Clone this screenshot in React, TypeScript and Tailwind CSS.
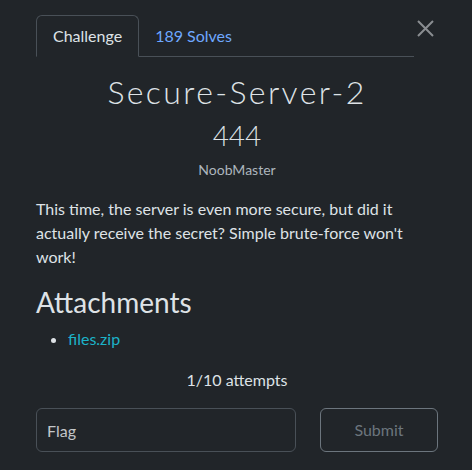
import React, { useState } from 'react';

const font = { fontFamily: 'Lato, "Open Sans", sans-serif' };

export default function App() {
  const [flag, setFlag] = useState('');

  return (
    <div
      className="min-h-[470px] w-[472px] bg-[#212529] pl-9 pr-[34px] pt-[15px] text-[#dee2e6] font-['Lato',sans-serif]"
      style={font}
    >
      {/* Tabs + close */}
      <div className="flex items-start">
        <div className="flex flex-1 border-b border-[#495057]">
          <button className="-mb-px h-[42px] rounded-t-[6px] border border-b-[#212529] border-[#495057] bg-[#212529] px-4 text-[16px] leading-6 text-[#dee2e6]">
            Challenge
          </button>
          <button className="h-[41px] px-4 text-[16px] leading-6 text-[#6ea8fe]">
            189 Solves
          </button>
        </div>
        <button
          className="mt-[2px] flex h-[22px] w-[24px] items-center justify-center pr-[2px] text-[#8a8d91]"
          aria-label="Close"
        >
          <svg width="17" height="17" viewBox="0 0 17 17" fill="none">
            <path d="M1 1L16 16M16 1L1 16" stroke="currentColor" strokeWidth="2" />
          </svg>
        </button>
      </div>

      {/* Heading */}
      <div className="flex flex-col items-center pt-[11px]">
        <h2 className="text-[32px] font-light leading-[48px] tracking-[2.4px] text-[#dee2e6]">
          Secure-Server-2
        </h2>
        <h3 className="text-[28px] font-light leading-[38px] text-[#dee2e6]">444</h3>
        <p className="mt-[6px] text-[14px] leading-5 text-[#adb5bd]">NoobMaster</p>
      </div>

      {/* Description */}
      <p className="mt-[17px] text-[16px] leading-6 text-[#dee2e6]">
        This time, the server is even more secure, but did it actually receive the secret? Simple
        brute-force won't work!
      </p>

      <h3 className="mt-[13px] text-[28px] leading-[40px] text-[#dee2e6]">Attachments</h3>
      <ul className="mt-[5px] list-disc pl-8 text-[16px] leading-6 marker:text-[#dee2e6]">
        <li>
          <a href="#" className="text-[#1cb3c8]">
            files.zip
          </a>
        </li>
      </ul>

      <p className="mt-[17px] text-center text-[16px] leading-6 text-[#dee2e6]">1/10 attempts</p>

      <div className="mt-[16px] flex gap-6">
        <input
          value={flag}
          onChange={(e) => setFlag(e.target.value)}
          placeholder="Flag"
          className="h-[44px] flex-1 rounded-[6px] border border-[#495057] bg-[#212529] px-[10px] text-[16px] text-[#dee2e6] placeholder:text-[#c3c6c9] outline-none"
        />
        <button className="h-[44px] w-[118px] rounded-[6px] border border-[#6c757d] text-[16px] text-[#6c757d]">
          Submit
        </button>
      </div>
    </div>
  );
}
